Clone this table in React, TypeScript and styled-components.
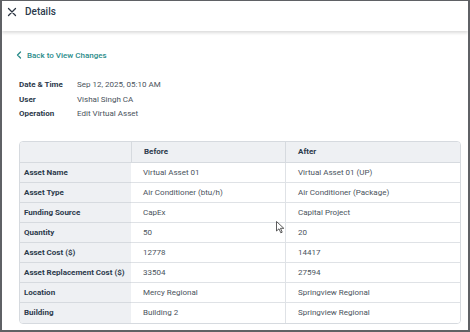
import React from 'react';
import styled, { createGlobalStyle } from 'styled-components';

const GlobalStyle = createGlobalStyle`
  html, body {
    margin: 0;
    padding: 0;
    background: #fff;
  }
  * {
    box-sizing: border-box;
  }
`;

const Frame = styled.div`
  width: 470px;
  height: 332px;
  border-style: solid;
  border-color: #5f6165;
  border-width: 1px 2px 2px 2px;
  background: #fff;
  font-family: Roboto, 'Noto Sans', sans-serif;
  font-size: 8px;
  position: relative;
  overflow: hidden;
`;

const Header = styled.header`
  height: 30px;
  display: flex;
  align-items: flex-start;
  gap: 7px;
  padding: 5px 0 0 4px;
  background: #fff;
  box-shadow: 0 2px 3px rgba(0, 0, 0, 0.14);
  position: relative;
  z-index: 1;
`;

const CloseButton = styled.button`
  border: none;
  background: none;
  padding: 0;
  width: 12px;
  height: 12px;
  display: flex;
  align-items: center;
  justify-content: center;
  color: #2b3542;
  cursor: pointer;
`;

const HeaderTitle = styled.h1`
  margin: 0;
  font-size: 10px;
  line-height: 12px;
  font-weight: 500;
  color: #2b3a4c;
`;

const Body = styled.div`
  padding: 19px 6px 0 14px;
`;

const BackLink = styled.a`
  display: flex;
  width: max-content;
  align-items: center;
  gap: 5px;
  height: 10px;
  color: #2a8c8a;
  font-size: 8px;
  font-weight: 500;
  text-decoration: none;
  cursor: pointer;
`;

const Meta = styled.dl`
  margin: 20px 0 0 3px;
  display: grid;
  grid-template-columns: 58px 1fr;
  row-gap: 5px;
  font-size: 8px;
  line-height: 9.5px;
`;

const MetaLabel = styled.dt`
  font-weight: 700;
  color: #2c3a4b;
`;

const MetaValue = styled.dd`
  margin: 0;
  color: #4a535d;
`;

const Table = styled.table`
  margin: 22px 0 0 3px;
  width: 442px;
  border-collapse: separate;
  border-spacing: 0;
  border: 1px solid #d6dadf;
  border-radius: 4px;
  overflow: hidden;
  font-size: 8px;
  table-layout: fixed;
`;

const HeadCell = styled.th`
  height: 21px;
  padding: 0 12px;
  text-align: left;
  font-weight: 700;
  color: #2c3a4b;
  background: #eef0f3;
  border-bottom: 1px solid #d6dadf;
  & + & {
    border-left: 1px solid #d6dadf;
  }
`;

const RowLabel = styled.th<{ $last?: boolean }>`
  height: 20px;
  padding: 0 4px;
  text-align: left;
  font-weight: 700;
  color: #2c3a4b;
  background: #eef0f3;
  border-bottom: ${(p) => (p.$last ? 'none' : '1px solid #d6dadf')};
`;

const Cell = styled.td<{ $last?: boolean; $divider?: boolean }>`
  height: 20px;
  padding: 0 12px;
  color: #4a535d;
  background: #fff;
  border-bottom: ${(p) => (p.$last ? 'none' : '1px solid #dfe2e6')};
  border-left: ${(p) => (p.$divider ? '1px solid #dfe2e6' : 'none')};
`;

const Pointer = styled.svg`
  position: absolute;
  left: 274px;
  top: 220px;
`;

const rows: [string, string, string][] = [
  ['Asset Name', 'Virtual Asset 01', 'Virtual Asset 01 (UP)'],
  ['Asset Type', 'Air Conditioner (btu/h)', 'Air Conditioner (Package)'],
  ['Funding Source', 'CapEx', 'Capital Project'],
  ['Quantity', '50', '20'],
  ['Asset Cost ($)', '12778', '14417'],
  ['Asset Replacement Cost ($)', '33504', '27594'],
  ['Location', 'Mercy Regional', 'Springview Regional'],
  ['Building', 'Building 2', 'Springview Regional'],
];

const App: React.FC = () => (
  <>
    <GlobalStyle />
    <Frame>
      <Header>
        <CloseButton aria-label="Close">
          <svg width="10" height="10" viewBox="0 0 10 10">
            <path d="M1.5 1.5L8.5 8.5M8.5 1.5L1.5 8.5" stroke="currentColor" strokeWidth="1.3" strokeLinecap="round" />
          </svg>
        </CloseButton>
        <HeaderTitle>Details</HeaderTitle>
      </Header>

      <Body>
        <BackLink>
          <svg width="6" height="8" viewBox="0 0 6 8">
            <path d="M4.5 1L1.5 4L4.5 7" fill="none" stroke="currentColor" strokeWidth="1.3" strokeLinecap="round" strokeLinejoin="round" />
          </svg>
          Back to View Changes
        </BackLink>

        <Meta>
          <MetaLabel>Date &amp; Time</MetaLabel>
          <MetaValue>Sep 12, 2025, 05:10 AM</MetaValue>
          <MetaLabel>User</MetaLabel>
          <MetaValue>Vishal Singh CA</MetaValue>
          <MetaLabel>Operation</MetaLabel>
          <MetaValue>Edit Virtual Asset</MetaValue>
        </Meta>

        <Table>
          <colgroup>
            <col style={{ width: 111 }} />
            <col style={{ width: 154 }} />
            <col />
          </colgroup>
          <thead>
            <tr>
              <HeadCell />
              <HeadCell>Before</HeadCell>
              <HeadCell>After</HeadCell>
            </tr>
          </thead>
          <tbody>
            {rows.map(([label, before, after], i) => {
              const last = i === rows.length - 1;
              return (
                <tr key={label}>
                  <RowLabel $last={last}>{label}</RowLabel>
                  <Cell $last={last}>{before}</Cell>
                  <Cell $last={last} $divider>{after}</Cell>
                </tr>
              );
            })}
          </tbody>
        </Table>
      </Body>

      <Pointer width="9" height="13" viewBox="0 0 9 13">
        <path d="M0.5 0.5L0.5 10L3 7.8L4.8 11.8L6.2 11.2L4.5 7.3L7.8 7.3Z" fill="#fff" stroke="#333" strokeWidth="0.8" strokeLinejoin="round" />
      </Pointer>
    </Frame>
  </>
);

export default App;
